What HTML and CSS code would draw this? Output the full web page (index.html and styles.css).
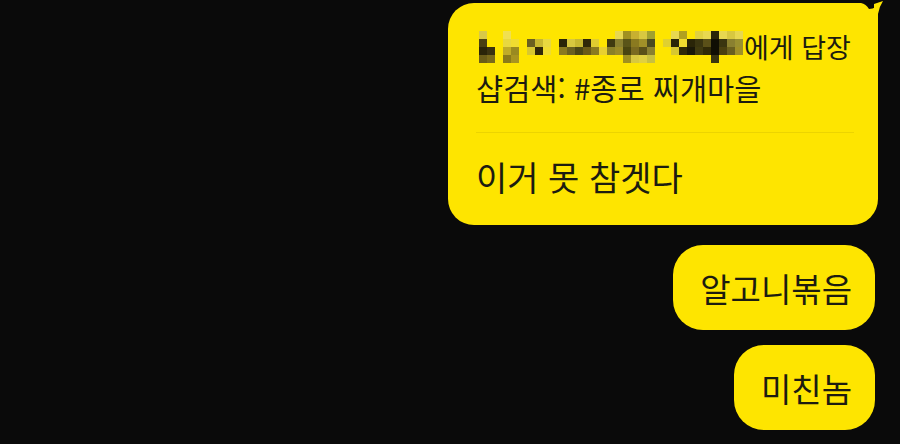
FILE: index.html
```html
<!DOCTYPE html>
<html lang="ko">
<head>
<meta charset="utf-8">
<link rel="stylesheet" href="styles.css">
</head>
<body>
<div class="chat">
  <div class="bubble bubble-reply">
    <svg class="tail" width="30" height="26" viewBox="0 0 30 26">
      <path class="tail-notch" d="M0,0 L0,3 L7,3 Q12,4 15,9 Q22,9 30,0 Z"/>
      <path class="tail-tip" d="M20,4 L29,1 Q25,7 24,14 L24,26 L20,26 Z"/>
    </svg>
    <div class="reply-head">
      <div class="reply-to">
        <svg class="mosaic" width="264" height="32" viewBox="0 0 264 32" shape-rendering="crispEdges">
          <rect x="0" y="0" width="8" height="8" fill="#d8c848"/>
          <rect x="0" y="8" width="8" height="8" fill="#4a4012"/>
          <rect x="0" y="16" width="8" height="8" fill="#2a2408"/>
          <rect x="0" y="24" width="8" height="8" fill="#6a5c18"/>
          <rect x="8" y="16" width="8" height="8" fill="#3a3210"/>
          <rect x="8" y="24" width="8" height="8" fill="#7a6a1a"/>
          <rect x="24" y="0" width="8" height="8" fill="#f0e050"/>
          <rect x="24" y="8" width="8" height="8" fill="#e8d840"/>
          <rect x="24" y="16" width="8" height="8" fill="#c0ac28"/>
          <rect x="24" y="24" width="8" height="8" fill="#8a7a1a"/>
          <rect x="32" y="8" width="8" height="8" fill="#f0dc30"/>
          <rect x="32" y="16" width="8" height="8" fill="#9a8a20"/>
          <rect x="32" y="24" width="8" height="8" fill="#a89420"/>
          <rect x="48" y="8" width="8" height="8" fill="#6a6020"/>
          <rect x="48" y="16" width="8" height="8" fill="#d8c830"/>
          <rect x="56" y="8" width="8" height="8" fill="#c8b830"/>
          <rect x="56" y="16" width="8" height="8" fill="#302808"/>
          <rect x="64" y="8" width="8" height="8" fill="#e8d840"/>
          <rect x="64" y="16" width="8" height="8" fill="#f0dc30"/>
          <rect x="80" y="8" width="8" height="8" fill="#2a2508"/>
          <rect x="80" y="16" width="8" height="8" fill="#8a7a20"/>
          <rect x="88" y="8" width="8" height="8" fill="#d8c840"/>
          <rect x="88" y="16" width="8" height="8" fill="#6a6020"/>
          <rect x="96" y="8" width="8" height="8" fill="#c8b830"/>
          <rect x="96" y="16" width="8" height="8" fill="#4a4515"/>
          <rect x="104" y="8" width="8" height="8" fill="#302808"/>
          <rect x="104" y="16" width="8" height="8" fill="#6a5a18"/>
          <rect x="112" y="8" width="8" height="8" fill="#e0cc30"/>
          <rect x="112" y="16" width="8" height="8" fill="#8a7a20"/>
          <rect x="120" y="16" width="8" height="8" fill="#e8d030"/>
          <rect x="128" y="8" width="8" height="8" fill="#403a10"/>
          <rect x="128" y="16" width="8" height="8" fill="#8a8028"/>
          <rect x="136" y="0" width="8" height="8" fill="#e8d850"/>
          <rect x="136" y="8" width="8" height="8" fill="#8a8030"/>
          <rect x="136" y="16" width="8" height="8" fill="#9a8a28"/>
          <rect x="144" y="0" width="8" height="8" fill="#a09020"/>
          <rect x="144" y="8" width="8" height="8" fill="#5a5418"/>
          <rect x="144" y="16" width="8" height="8" fill="#4a4510"/>
          <rect x="144" y="24" width="8" height="8" fill="#a09020"/>
          <rect x="152" y="0" width="8" height="8" fill="#c8b030"/>
          <rect x="152" y="8" width="8" height="8" fill="#8a7a20"/>
          <rect x="152" y="16" width="8" height="8" fill="#7a6a20"/>
          <rect x="152" y="24" width="8" height="8" fill="#d8c840"/>
          <rect x="160" y="0" width="8" height="8" fill="#d8c840"/>
          <rect x="160" y="8" width="8" height="8" fill="#a09028"/>
          <rect x="160" y="16" width="8" height="8" fill="#5a5018"/>
          <rect x="160" y="24" width="8" height="8" fill="#e0d040"/>
          <rect x="168" y="0" width="8" height="8" fill="#a0a030"/>
          <rect x="168" y="8" width="8" height="8" fill="#4a4a20"/>
          <rect x="168" y="16" width="8" height="8" fill="#8a8030"/>
          <rect x="168" y="24" width="8" height="8" fill="#c8c040"/>
          <rect x="184" y="8" width="8" height="8" fill="#e0d030"/>
          <rect x="192" y="0" width="8" height="8" fill="#e8d850"/>
          <rect x="192" y="8" width="8" height="8" fill="#2a2508"/>
          <rect x="192" y="16" width="8" height="8" fill="#d8c830"/>
          <rect x="200" y="0" width="8" height="8" fill="#b0a020"/>
          <rect x="200" y="8" width="8" height="8" fill="#f0dc30"/>
          <rect x="200" y="16" width="8" height="8" fill="#302a08"/>
          <rect x="208" y="8" width="8" height="8" fill="#2a2508"/>
          <rect x="208" y="16" width="8" height="8" fill="#1a1808"/>
          <rect x="216" y="0" width="8" height="8" fill="#e0d040"/>
          <rect x="216" y="8" width="8" height="8" fill="#3a3510"/>
          <rect x="216" y="16" width="8" height="8" fill="#403a10"/>
          <rect x="224" y="0" width="8" height="8" fill="#e8d850"/>
          <rect x="224" y="8" width="8" height="8" fill="#5a5018"/>
          <rect x="224" y="16" width="8" height="8" fill="#302a08"/>
          <rect x="232" y="0" width="8" height="8" fill="#2a2508"/>
          <rect x="232" y="8" width="8" height="8" fill="#100e04"/>
          <rect x="232" y="16" width="8" height="8" fill="#100e04"/>
          <rect x="232" y="24" width="8" height="8" fill="#3a3510"/>
          <rect x="240" y="0" width="8" height="8" fill="#e8d850"/>
          <rect x="240" y="8" width="8" height="8" fill="#3a3510"/>
          <rect x="240" y="16" width="8" height="8" fill="#4a4010"/>
          <rect x="248" y="0" width="8" height="8" fill="#d8c840"/>
          <rect x="248" y="8" width="8" height="8" fill="#8a8030"/>
          <rect x="248" y="16" width="8" height="8" fill="#6a6020"/>
          <rect x="256" y="0" width="8" height="8" fill="#e8d850"/>
          <rect x="256" y="8" width="8" height="8" fill="#9a9030"/>
          <rect x="256" y="16" width="8" height="8" fill="#a09028"/>
        </svg><span class="reply-label">에게 답장</span>
      </div>
      <div class="reply-quote">샵검색: #종로 찌개마을</div>
    </div>
    <div class="divider"></div>
    <div class="body-text">이거 못 참겟다</div>
  </div>
  <div class="bubble bubble-short first">알고니볶음</div>
  <div class="bubble bubble-short second">미친놈</div>
</div>
</body>
</html>
```
FILE: styles.css
```css
html, body {
  margin: 0;
  padding: 0;
  background: #0a0a0a;
  height: 100%;
  overflow: hidden;
}

body {
  font-family: "Noto Sans CJK KR", "Noto Sans", sans-serif;
  color: #1c1c10;
}

.chat {
  display: flex;
  flex-direction: column;
  align-items: flex-end;
  padding: 3px 22px 0 0;
}

.bubble {
  background: #fee500;
  box-sizing: border-box;
}

.bubble-reply {
  position: relative;
  width: 430px;
  padding: 24px 24px 26px 28px;
  border-radius: 26px 0 26px 26px;
}

.tail {
  position: absolute;
  top: -3px;
  right: -6px;
}

.tail-notch {
  fill: #0a0a0a;
}

.tail-tip {
  fill: #fee500;
}

.reply-head {
  line-height: 40px;
}

.reply-to {
  display: flex;
  align-items: center;
  font-size: 27px;
}

.mosaic {
  display: block;
  margin-left: 3px;
  flex: none;
}

.reply-label {
  margin-left: 1px;
}

.reply-quote {
  font-size: 29.5px;
}

.divider {
  height: 1px;
  background: rgba(0, 0, 0, 0.07);
  margin: 25px 0 22px;
}

.body-text {
  font-size: 34px;
  line-height: 44px;
}

.bubble-short {
  height: 85px;
  display: flex;
  align-items: center;
  padding: 0 23px 0 27px;
  border-radius: 30px;
  font-size: 33px;
  margin-right: 3px;
}

.bubble-short.first {
  margin-top: 20px;
}

.bubble-short.second {
  margin-top: 15px;
}
```
